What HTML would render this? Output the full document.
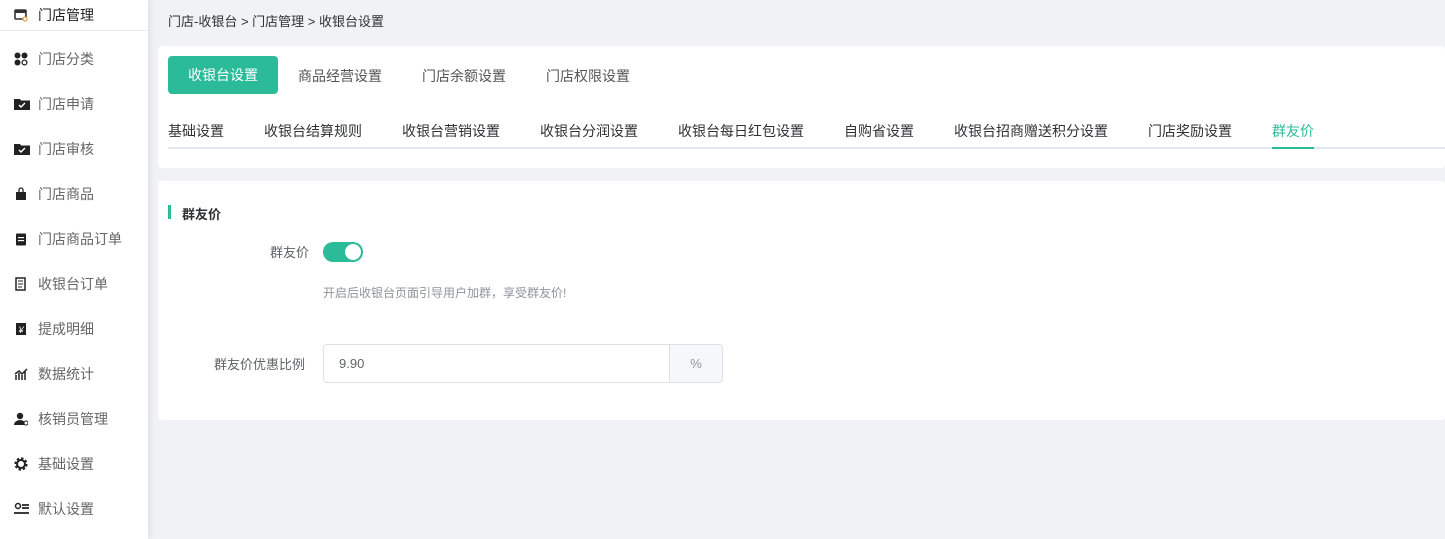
<!DOCTYPE html>
<html><head><meta charset="utf-8"><style>
*{margin:0;padding:0;box-sizing:border-box}
body{width:1445px;height:539px;background:#f0f2f5;font-family:"Liberation Sans","Noto Sans CJK SC",sans-serif;font-size:14px;color:#333;position:relative;overflow:hidden}
.side{position:absolute;left:0;top:0;width:148px;height:539px;background:#fff;box-shadow:2px 0 6px rgba(0,0,0,.08)}
.side .it{position:absolute;left:14px;height:20px;display:flex;align-items:center;color:#666;font-size:14px}
.side .it i{display:inline-block;width:16px;height:14px;margin-right:8px;position:relative}
.abs{position:absolute}
.card{position:absolute;background:#fff;border-radius:4px}
.t{position:absolute;font-size:14px;color:#303133;white-space:nowrap}
</style></head><body>
<div class="side">
<div class="abs" style="left:0;top:30px;width:148px;height:1px;background:#e8eaee"></div>
<div class="it" style="top:5px;color:#222"><i><svg width="14" height="14" viewBox="0 0 14 14"><rect x="1" y="2" width="11" height="9" rx="1" fill="none" stroke="#333" stroke-width="1.6"/><rect x="1" y="2" width="11" height="3" fill="#333"/><circle cx="11" cy="11" r="2" fill="#fff" stroke="#e6a23c" stroke-width="1.3"/></svg></i>门店管理</div>
<div class="it" style="top:49px"><i><svg width="14" height="14"><circle cx="3.5" cy="3.5" r="3" fill="#222"/><circle cx="10.5" cy="3.5" r="3" fill="#222"/><circle cx="3.5" cy="10.5" r="3" fill="#222"/><circle cx="10.5" cy="10.5" r="2.4" fill="none" stroke="#222" stroke-width="1.3"/></svg></i>门店分类</div>
<div class="it" style="top:94px"><i><svg width="16" height="14"><path d="M0 2h6l1 1.5h9V13H0z" fill="#222"/><path d="M5 8l2 2 4-4" stroke="#fff" stroke-width="1.5" fill="none"/></svg></i>门店申请</div>
<div class="it" style="top:139px"><i><svg width="16" height="14"><path d="M0 2h6l1 1.5h9V13H0z" fill="#222"/><path d="M5 8l2 2 4-4" stroke="#fff" stroke-width="1.5" fill="none"/></svg></i>门店审核</div>
<div class="it" style="top:184px"><i><svg width="14" height="14"><path d="M5 5V3a2 2 0 014 0v2" stroke="#222" fill="none" stroke-width="1.3"/><rect x="2" y="5" width="10" height="8" fill="#222"/></svg></i>门店商品</div>
<div class="it" style="top:229px"><i><svg width="14" height="14"><rect x="2" y="1.5" width="10" height="12" rx="1" fill="#222"/><rect x="4" y="5" width="6" height="1.2" fill="#fff"/><rect x="4" y="8" width="6" height="1.2" fill="#fff"/></svg></i>门店商品订单</div>
<div class="it" style="top:274px"><i><svg width="14" height="14"><rect x="2" y="1" width="9" height="12" fill="none" stroke="#222" stroke-width="1.5"/><path d="M4 4h5M4 7h5M4 10h4" stroke="#222"/></svg></i>收银台订单</div>
<div class="it" style="top:319px"><i><svg width="14" height="14"><rect x="2" y="1" width="10" height="12" fill="#222"/><text x="7" y="11" font-size="9" fill="#fff" text-anchor="middle">¥</text></svg></i>提成明细</div>
<div class="it" style="top:364px"><i><svg width="14" height="14"><path d="M2 13V8M5 13V6M8 13V8M11 13V4M1 7l4-3 3 3 5-5" stroke="#222" stroke-width="1.5" fill="none"/></svg></i>数据统计</div>
<div class="it" style="top:409px"><i><svg width="14" height="14"><circle cx="6" cy="4" r="3.2" fill="#222"/><path d="M0 13a6 5 0 0112 0z" fill="#222"/><circle cx="12" cy="11" r="2" fill="#fff" stroke="#222"/></svg></i>核销员管理</div>
<div class="it" style="top:454px"><i><svg width="14" height="14"><circle cx="7" cy="7" r="5" fill="none" stroke="#222" stroke-width="3.2" stroke-dasharray="2.2 1.7"/><circle cx="7" cy="7" r="4" fill="none" stroke="#222" stroke-width="2"/></svg></i>基础设置</div>
<div class="it" style="top:499px"><i><svg width="16" height="14"><circle cx="4" cy="4" r="2.5" fill="none" stroke="#222" stroke-width="1.5"/><path d="M8 3h7M8 6h7M0 11h15" stroke="#222" stroke-width="1.8"/></svg></i>默认设置</div>
</div>

<div class="t" style="left:168px;top:11px;font-size:13px">门店-收银台 &gt; 门店管理 &gt; 收银台设置</div>

<div class="card" style="left:158px;top:46px;width:1287px;height:122px">
<div class="abs" style="left:10px;top:10px;width:110px;height:38px;background:#2bbb98;border-radius:4px;color:#fff;text-align:center;line-height:38px">收银台设置</div>
<div class="t" style="left:140px;top:20px;color:#555">商品经营设置</div>
<div class="t" style="left:264px;top:20px;color:#555">门店余额设置</div>
<div class="t" style="left:388px;top:20px;color:#555">门店权限设置</div>
<div class="t" style="left:10px;top:75px">基础设置</div>
<div class="t" style="left:106px;top:75px">收银台结算规则</div>
<div class="t" style="left:244px;top:75px">收银台营销设置</div>
<div class="t" style="left:382px;top:75px">收银台分润设置</div>
<div class="t" style="left:520px;top:75px">收银台每日红包设置</div>
<div class="t" style="left:686px;top:75px">自购省设置</div>
<div class="t" style="left:796px;top:75px">收银台招商赠送积分设置</div>
<div class="t" style="left:990px;top:75px">门店奖励设置</div>
<div class="t" style="left:1114px;top:75px;color:#2bbb98">群友价</div>
<div class="abs" style="left:10px;top:101px;width:1277px;height:2px;background:#e4e7ed"></div>
<div class="abs" style="left:1114px;top:101px;width:42px;height:2px;background:#2bbb98"></div>
</div>

<div class="card" style="left:158px;top:181px;width:1287px;height:239px">
<div class="abs" style="left:10px;top:24px;width:3px;height:14px;background:#2bbb98"></div>
<div class="t" style="left:24px;top:23px;font-size:13px;font-weight:bold">群友价</div>
<div class="t" style="left:112px;top:61px;font-size:13px;color:#606266">群友价</div>
<div class="abs" style="left:165px;top:61px;width:40px;height:20px;border-radius:10px;background:#2bbb98"></div>
<div class="abs" style="left:187px;top:63px;width:16px;height:16px;border-radius:50%;background:#fff"></div>
<div class="t" style="left:165px;top:103px;font-size:12px;color:#909399">开启后收银台页面引导用户加群，享受群友价!</div>
<div class="t" style="left:56px;top:173px;font-size:13px;color:#606266">群友价优惠比例</div>
<div class="abs" style="left:165px;top:163px;width:400px;height:39px;border:1px solid #dcdfe6;border-radius:4px;overflow:hidden">
<div class="t" style="left:15px;top:11px;font-size:13px;color:#606266">9.90</div>
<div class="abs" style="right:0;top:0;width:53px;height:37px;background:#f5f7fa;border-left:1px solid #dcdfe6;text-align:center;line-height:37px;color:#909399;font-size:13px">%</div>
</div>
</div>
</body></html>
